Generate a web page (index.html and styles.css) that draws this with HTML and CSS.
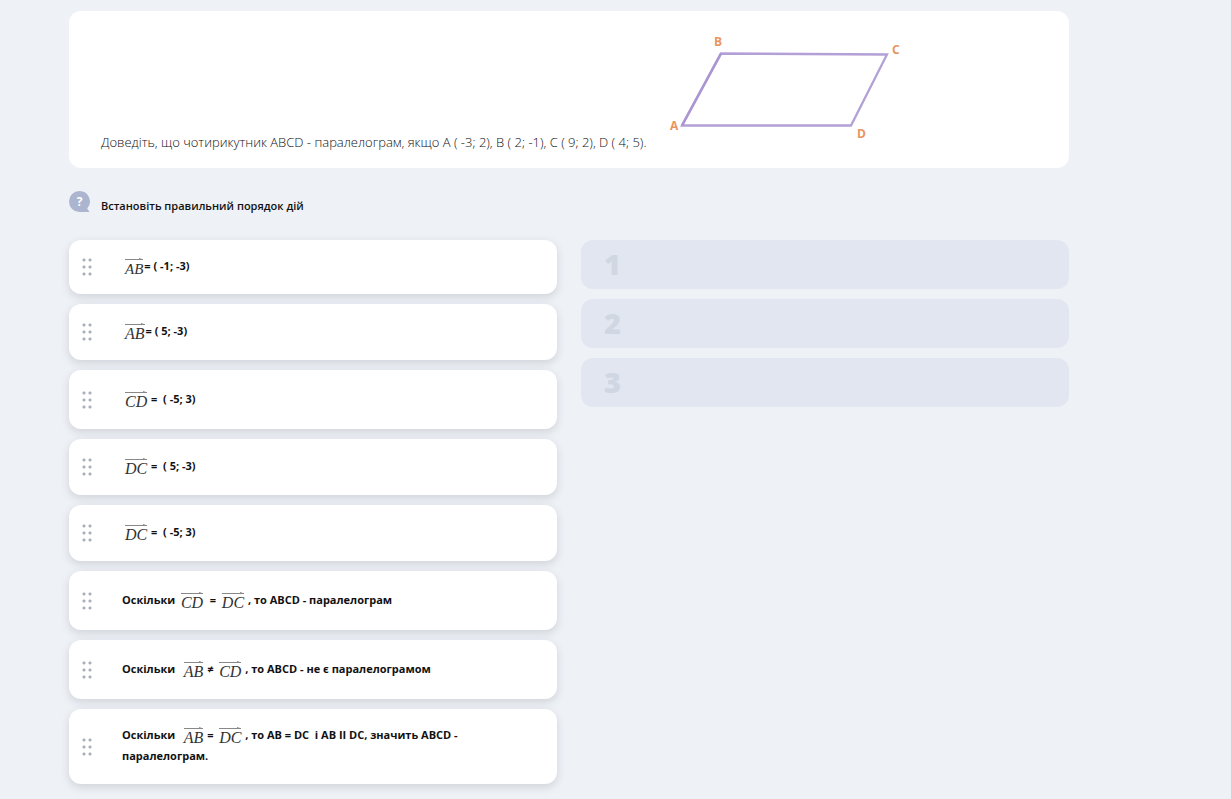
FILE: index.html
```html
<!DOCTYPE html>
<html lang="uk">
<head>
    <meta charset="UTF-8">
    <meta name="viewport" content="width=device-width, initial-scale=1.0">
    <title>Встановіть правильний порядок дій</title>
    <link rel="stylesheet" href="styles.css">
</head>
<body>

    <main class="container">

        <section class="question">
            <p class="question-text">Доведіть, що чотирикутник ABCD - паралелограм, якщо A ( -3; 2), B ( 2; -1), C ( 9; 2), D ( 4; 5).</p>
            <svg class="figure" width="240" height="116" viewBox="0 0 240 116" role="img" aria-label="Паралелограм ABCD">
                <path d="M18 95.500H187L223 24.500 57 23.500Z" fill="none" stroke="#b3a0d6" stroke-width="2.300"/>
                <path d="M18 95.500 57 23.500" fill="none" stroke="#ab96d4" stroke-width="2.600"/>
                <text x="6" y="100">A</text>
                <text x="50" y="16">B</text>
                <text x="228" y="24">C</text>
                <text x="193" y="108">D</text>
            </svg>
        </section>

        <div class="hint">
            <svg class="hint-icon" width="21" height="21" viewBox="0 0 21 21" aria-hidden="true">
                <path d="M10.500 0A10.500 10.500 0 1 0 10.500 21H20.500L18.200 17.500A10.500 10.500 0 0 0 10.500 0Z" fill="#acb5cf"/>
                <text x="10.500" y="15" text-anchor="middle">?</text>
            </svg>
            <h1>Встановіть правильний порядок дій</h1>
        </div>

        <div class="board">
            <ul class="answers">
                <li class="answer short">
                    <span class="grip"></span>
                    <p class="formula"><span class="vec small">AB</span>= ( -1; -3)</p>
                </li>
                <li class="answer">
                    <span class="grip"></span>
                    <p class="formula"><span class="vec">AB</span>= ( 5; -3)</p>
                </li>
                <li class="answer tall">
                    <span class="grip"></span>
                    <p class="formula"><span class="vec">CD</span> =&nbsp; ( -5; 3)</p>
                </li>
                <li class="answer">
                    <span class="grip"></span>
                    <p class="formula"><span class="vec">DC</span> =&nbsp; ( 5; -3)</p>
                </li>
                <li class="answer">
                    <span class="grip"></span>
                    <p class="formula"><span class="vec">DC</span> =&nbsp; ( -5; 3)</p>
                </li>
                <li class="answer tall">
                    <span class="grip"></span>
                    <p>Оскільки&nbsp; <span class="vec">CD</span>&nbsp; =&nbsp; <span class="vec">DC</span> , то ABCD - паралелограм</p>
                </li>
                <li class="answer tall">
                    <span class="grip"></span>
                    <p>Оскільки&nbsp;&nbsp; <span class="vec">AB</span> ≠&nbsp; <span class="vec">CD</span> , то ABCD - не є паралелограмом</p>
                </li>
                <li class="answer double">
                    <span class="grip"></span>
                    <p>Оскільки&nbsp;&nbsp; <span class="vec">AB</span> =&nbsp; <span class="vec">DC</span> , то AB = DC&nbsp; і AB II DC, значить ABCD - паралелограм.</p>
                </li>
            </ul>

            <ol class="slots">
                <li class="slot">1</li>
                <li class="slot">2</li>
                <li class="slot">3</li>
            </ol>
        </div>

    </main>

</body>
</html>
```
FILE: styles.css
```css
* {
    box-sizing: border-box;
}
body {
    margin: 0;
    background-color: #eef1f6;
    color: #111;
    font-family: "Open Sans", "Noto Sans", sans-serif;
}
h1, p, ul, ol {
    margin: 0;
    padding: 0;
}
ul, ol {
    list-style: none;
}
.container {
    max-width: 1069px;
    margin-left: 69px;
    padding: 11px 69px 15px 0;
}

/* question card */
.question {
    display: flex;
    align-items: flex-end;
    gap: 18px;
    padding: 19px 32px 17px;
    background: white;
    border-radius: 12px;
}
.question-text {
    font-size: 13px;
    font-weight: 300;
    line-height: 18px;
    color: #111;
}
.figure {
    flex: none;
    margin-bottom: 5px;
}
.figure text {
    font-size: 12px;
    font-weight: 700;
    fill: #e8955f;
}

.hint {
    display: flex;
    gap: 11px;
    margin: 23px 0 24px;
}
.hint-icon {
    flex: none;
}
.hint-icon text {
    font-size: 12px;
    font-weight: 700;
    fill: white;
}
.hint h1 {
    padding-top: 5px;
    font-size: 11px;
    font-weight: 600;
    line-height: 20px;
}

/* answers on the left, places for them on the right */
.board {
    display: grid;
    grid-template-columns: 1fr 1fr;
    align-items: start;
    gap: 24px;
}
.answers, .slots {
    display: flex;
    flex-direction: column;
    gap: 10px;
}
.answer {
    display: flex;
    align-items: center;
    gap: 30px;
    min-height: 56px;
    padding: 0 84px 0 13px;
    background: white;
    border-radius: 12px;
    box-shadow: 0 3px 8px rgba(50, 55, 60, 0.16);
    font-size: 11px;
    font-weight: 700;
    line-height: 21px;
    cursor: grab;
}
.answer p {
    padding-bottom: 3px;
}
.short {
    min-height: 54px;
}
.tall {
    min-height: 59px;
}
.double {
    min-height: 75px;
}
.formula {
    padding-left: 3px;
}
.grip {
    flex: none;
    width: 10px;
    height: 18px;
    background: radial-gradient(circle at 2px 2px, #a9afbb 1px, transparent 2px) 0 0 / 6px 7px;
}
.vec {
    position: relative;
    display: inline-block;
    height: 17px;
    margin-right: 1px;
    border-top: 1px solid #888;
    vertical-align: -4px;
    font-family: "Liberation Serif", serif;
    font-size: 16px;
    font-style: italic;
    font-weight: 400;
    line-height: 18px;
    color: #333;
}
.small {
    font-size: 15px;
}
.vec::after {
    content: "";
    position: absolute;
    top: -2px;
    right: 0;
    border: 1px solid transparent;
    border-left: 3px solid #888;
}

.slot {
    height: 49px;
    padding-left: 23px;
    background: #e2e6f0;
    border-radius: 12px;
    font-size: 29px;
    font-weight: 800;
    line-height: 47px;
    color: #d1d6e3;
}
```
